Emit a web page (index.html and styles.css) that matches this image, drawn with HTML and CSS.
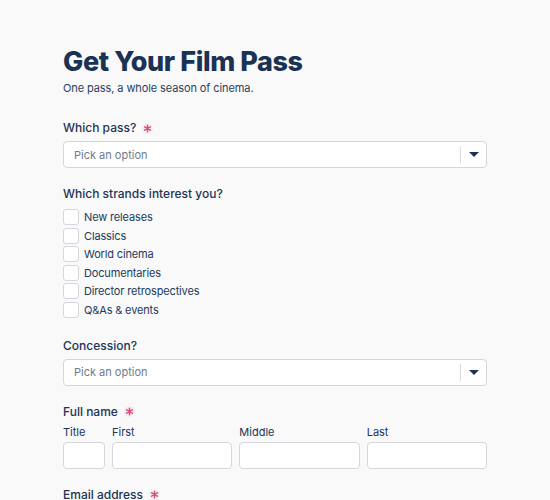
FILE: index.html
```html
<!DOCTYPE html>
<html lang="en">

<head>
    <meta charset="UTF-8">
    <meta name="viewport" content="width=device-width, initial-scale=1.0">
    <title>Get Your Film Pass</title>
    <link rel="stylesheet" href="styles.css">
</head>

<body>
    <form class="pass-form">
        <h1>Get Your Film Pass</h1>
        <p class="subtitle">One pass, a whole season of cinema.</p>

        <div class="field">
            <label class="label">Which pass?
                <svg class="req" width="11" height="11" viewBox="0 0 11 11">
                    <circle cx="5.5" cy="5.5" r="5.5" fill="#eef0f3"/>
                    <path d="M5.5 2.2v6.6M2.6 3.85l5.8 3.3M2.6 7.15l5.8-3.3" stroke="#e4477c" stroke-width="1.5" stroke-linecap="round"/>
                </svg>
            </label>
            <div class="select">
                <span class="placeholder">Pick an option</span>
                <span class="indicator"><span class="arrow"></span></span>
            </div>
        </div>

        <div class="field checks-field">
            <label class="label">Which strands interest you?</label>
            <div class="checks">
                <label class="check"><span class="box"></span>New releases</label>
                <label class="check"><span class="box"></span>Classics</label>
                <label class="check"><span class="box"></span>World cinema</label>
                <label class="check"><span class="box"></span>Documentaries</label>
                <label class="check"><span class="box"></span>Director retrospectives</label>
                <label class="check"><span class="box"></span>Q&amp;As &amp; events</label>
            </div>
        </div>

        <div class="field">
            <label class="label">Concession?</label>
            <div class="select">
                <span class="placeholder">Pick an option</span>
                <span class="indicator"><span class="arrow"></span></span>
            </div>
        </div>

        <div class="field">
            <label class="label">Full name
                <svg class="req" width="11" height="11" viewBox="0 0 11 11">
                    <circle cx="5.5" cy="5.5" r="5.5" fill="#eef0f3"/>
                    <path d="M5.5 2.2v6.6M2.6 3.85l5.8 3.3M2.6 7.15l5.8-3.3" stroke="#e4477c" stroke-width="1.5" stroke-linecap="round"/>
                </svg>
            </label>
            <div class="name-row">
                <div class="name-part title-part">
                    <span class="sublabel">Title</span>
                    <input class="input" type="text">
                </div>
                <div class="name-part">
                    <span class="sublabel">First</span>
                    <input class="input" type="text">
                </div>
                <div class="name-part">
                    <span class="sublabel">Middle</span>
                    <input class="input" type="text">
                </div>
                <div class="name-part">
                    <span class="sublabel">Last</span>
                    <input class="input" type="text">
                </div>
            </div>
        </div>

        <div class="field">
            <label class="label">Email address
                <svg class="req" width="11" height="11" viewBox="0 0 11 11">
                    <circle cx="5.5" cy="5.5" r="5.5" fill="#eef0f3"/>
                    <path d="M5.5 2.2v6.6M2.6 3.85l5.8 3.3M2.6 7.15l5.8-3.3" stroke="#e4477c" stroke-width="1.5" stroke-linecap="round"/>
                </svg>
            </label>
            <input class="input" type="email">
        </div>
    </form>
</body>

</html>
```

FILE: styles.css
```css
body {
    margin: 0;
    background-color: #f9f9fa;
    font-family: Inter, "Noto Sans", sans-serif;
    color: #1d3455;
}

.pass-form {
    width: 424px;
    margin: 0 auto;
    padding-top: 45px;
}

h1 {
    margin: 0;
    font-size: 27px;
    line-height: 34px;
    font-weight: 800;
    color: #1a3253;
    letter-spacing: -0.4px;
}

.subtitle {
    margin: 1px 0 24px;
    font-size: 11px;
    line-height: 16px;
    color: #2a3f5c;
    letter-spacing: -0.1px;
}

.field {
    margin-bottom: 18px;
}

.checks-field {
    margin-bottom: 20px;
}

.label {
    display: flex;
    align-items: center;
    gap: 6px;
    margin-bottom: 5px;
    font-size: 12px;
    line-height: 16px;
    font-weight: 500;
}

.select {
    display: flex;
    align-items: center;
    height: 27px;
    box-sizing: border-box;
    background-color: #fff;
    border: 1px solid #d3d7dd;
    border-radius: 4px;
}

.placeholder {
    flex: 1;
    padding-left: 10px;
    font-size: 11px;
    color: #6e7b8d;
}

.indicator {
    display: flex;
    align-items: center;
    justify-content: center;
    width: 25px;
    height: 17px;
    border-left: 1px solid #d8dce1;
}

.arrow {
    width: 0;
    height: 0;
    border-left: 5px solid transparent;
    border-right: 5px solid transparent;
    border-top: 5px solid #1a3253;
}

.checks {
    display: flex;
    flex-direction: column;
    gap: 2.6px;
    margin-top: 7px;
}

.check {
    display: flex;
    align-items: center;
    gap: 5px;
    font-size: 11px;
    line-height: 16px;
    letter-spacing: -0.15px;
    color: #23395a;
}

.box {
    width: 16px;
    height: 16px;
    box-sizing: border-box;
    background-color: #fff;
    border: 1px solid #d3d7dd;
    border-radius: 3px;
}

.name-row {
    display: flex;
    gap: 7px;
}

.name-part {
    flex: 1;
    display: flex;
    flex-direction: column;
}

.title-part {
    flex: 0 0 42px;
}

.sublabel {
    font-size: 11px;
    line-height: 15px;
    margin-bottom: 2px;
}

.input {
    display: block;
    width: 100%;
    height: 27px;
    box-sizing: border-box;
    margin: 0;
    background-color: #fff;
    border: 1px solid #d3d7dd;
    border-radius: 4px;
}
```
